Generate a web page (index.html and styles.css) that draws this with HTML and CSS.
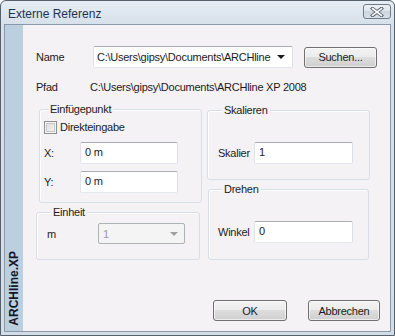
FILE: index.html
```html
<!DOCTYPE html>
<html lang="de">
<head>
    <meta charset="UTF-8">
    <title>Externe Referenz</title>
    <link rel="stylesheet" href="styles.css">
</head>
<body>
    <div class="window">
        <div class="titlebar">
            <span class="title">Externe Referenz</span>
            <span class="close-btn">
                <svg width="14" height="10" viewBox="0 0 14 10">
                    <path d="M2.5 1.5 L11.5 8.5 M11.5 1.5 L2.5 8.5" stroke="#4e5a66" stroke-width="3.4" stroke-linecap="square"/>
                    <path d="M2.5 1.5 L11.5 8.5 M11.5 1.5 L2.5 8.5" stroke="#ffffff" stroke-width="1.6" stroke-linecap="square"/>
                </svg>
            </span>
        </div>

        <div class="client">
            <div class="sidebar"><span class="brand">ARCHline.XP</span></div>

            <div class="main">
                <div class="name-row">
                    <span class="lbl-name">Name</span>
                    <div class="combo combo-name">
                        <span class="combo-text">C:\Users\gipsy\Documents\ARCHline</span>
                        <span class="arrow"></span>
                    </div>
                    <button class="btn btn-search">Suchen...</button>
                </div>

                <div class="path-row">
                    <span class="lbl-path">Pfad</span>
                    <span>C:\Users\gipsy\Documents\ARCHline XP 2008</span>
                </div>

                <div class="groups">
                    <div class="col-left">
                        <div class="group group-insert">
                            <span class="group-title">Einfügepunkt</span>
                            <div class="check-row">
                                <span class="checkbox"></span>
                                <span>Direkteingabe</span>
                            </div>
                            <div class="field-row">
                                <span class="lbl-xy">X:</span>
                                <div class="input input-xy">0 m</div>
                            </div>
                            <div class="field-row row-y">
                                <span class="lbl-xy">Y:</span>
                                <div class="input input-xy">0 m</div>
                            </div>
                        </div>

                        <div class="group group-unit">
                            <span class="group-title">Einheit</span>
                            <div class="field-row row-unit">
                                <span class="lbl-unit">m</span>
                                <div class="combo combo-disabled">
                                    <span class="combo-text">1</span>
                                    <span class="arrow"></span>
                                </div>
                            </div>
                        </div>
                    </div>

                    <div class="col-right">
                        <div class="group group-scale">
                            <span class="group-title">Skalieren</span>
                            <div class="field-row row-right">
                                <span class="lbl-right">Skalier</span>
                                <div class="input input-right">1</div>
                            </div>
                        </div>

                        <div class="group group-rotate">
                            <span class="group-title">Drehen</span>
                            <div class="field-row row-right">
                                <span class="lbl-right">Winkel</span>
                                <div class="input input-right">0</div>
                            </div>
                        </div>
                    </div>
                </div>

                <div class="actions">
                    <button class="btn btn-ok">OK</button>
                    <button class="btn btn-cancel">Abbrechen</button>
                </div>
            </div>
        </div>
    </div>
</body>
</html>
```

FILE: styles.css
```css
* {
    box-sizing: border-box;
}

body {
    margin: 0;
    font-family: "Liberation Sans", Arial, sans-serif;
    font-size: 11px;
    letter-spacing: -0.25px;
    color: #1b1b1b;
    background: #ffffff;
}

.window {
    width: 395px;
    height: 336px;
    display: flex;
    flex-direction: column;
    padding: 0 3px 3px;
    border: 1px solid #55616d;
    border-radius: 6px 6px 0 0;
    background: linear-gradient(#e6edf4, #d6e0ea 24px, #d2dde8);
}

/* title bar */
.titlebar {
    height: 23px;
    display: flex;
    justify-content: space-between;
    align-items: flex-start;
}

.title {
    margin: 6px 0 0 4px;
    font-size: 12px;
    line-height: 14px;
    letter-spacing: 0;
    color: #1e3350;
}

.close-btn {
    margin-top: 3px;
    width: 28px;
    height: 15px;
    display: flex;
    align-items: center;
    justify-content: center;
    border: 1px solid #6f7c8a;
    border-radius: 3px;
    background: linear-gradient(#eef2f6, #dde4eb 50%, #ccd5de 50%, #d8e0e8);
}

/* client area */
.client {
    flex: 1;
    display: flex;
    border: 1px solid #8b98a5;
    background: #f5f2f5;
}

.sidebar {
    width: 18px;
    display: flex;
    flex-direction: column;
    justify-content: flex-end;
    align-items: center;
    padding-bottom: 5px;
    background: #bccfdf;
}

.brand {
    writing-mode: vertical-rl;
    transform: rotate(180deg);
    font-size: 12px;
    font-weight: bold;
    line-height: 18px;
    letter-spacing: 0;
    color: #101828;
}

.main {
    flex: 1;
    padding: 21px 0 0 13px;
}

/* name / path */
.name-row {
    display: flex;
    align-items: center;
    height: 22px;
}

.lbl-name {
    width: 57px;
}

.combo {
    display: flex;
    align-items: center;
    justify-content: space-between;
    background: #ffffff;
    border: 1px solid;
    border-color: #abadb3 #dbdfe6 #e3e9ef #e2e3ea;
    border-radius: 2px;
    overflow: hidden;
}

.combo-name {
    width: 200px;
    height: 22px;
    padding: 0 7px 0 3px;
}

.combo-text {
    white-space: nowrap;
}

.arrow {
    flex: none;
    width: 0;
    height: 0;
    border-left: 4px solid transparent;
    border-right: 4px solid transparent;
    border-top: 4px solid #1b1b1b;
}

.btn {
    height: 21px;
    padding: 0;
    font-family: inherit;
    font-size: 11px;
    letter-spacing: -0.25px;
    color: #1b1b1b;
    border: 1px solid #707070;
    border-radius: 3px;
    background: linear-gradient(#f3f3f3, #ebebeb 50%, #dddddd 50%, #cfcfcf);
    box-shadow: inset 0 0 0 1px rgba(255, 255, 255, 0.6);
}

.btn-search {
    width: 73px;
    margin-left: 11px;
}

.path-row {
    display: flex;
    margin-top: 12px;
    line-height: 14px;
}

.lbl-path {
    width: 54px;
}

/* group boxes */
.groups {
    display: flex;
    margin-top: 8px;
}

.col-left {
    width: 166px;
}

.col-right {
    margin-left: 5px;
}

.group {
    border: 1px solid #d5dfe5;
    border-radius: 3px;
    box-shadow: inset 1px 1px 0 #ffffff;
}

.group-title {
    display: table;
    margin: -8px 0 0 4px;
    padding: 0 2px;
    line-height: 14px;
    background: #f5f2f5;
}

.group-insert {
    width: 163px;
    margin: 7px 0 0 3px;
    padding: 0 0 9px 4px;
}

.check-row {
    display: flex;
    align-items: center;
    gap: 3px;
    height: 14px;
    margin-top: 4px;
}

.checkbox {
    width: 13px;
    height: 13px;
    border: 1px solid #8e8f8f;
    background: linear-gradient(135deg, #dcdcdc, #f4f4f4);
    box-shadow: inset 0 0 0 1px #f4f4f4, inset 0 0 0 2px #c8c8c8;
}

.field-row {
    display: flex;
    align-items: center;
    margin-top: 8px;
}

.row-y {
    margin-top: 7px;
}

.lbl-xy {
    width: 36px;
}

.input {
    height: 22px;
    padding: 0 4px;
    line-height: 18px;
    background: #ffffff;
    border: 1px solid;
    border-color: #abadb3 #dbdfe6 #e3e9ef #e2e3ea;
    border-radius: 2px;
}

.input-xy {
    width: 98px;
}

.group-unit {
    width: 164px;
    margin-top: 9px;
    padding: 0 0 15px 10px;
}

.row-unit {
    margin-top: 4px;
}

.lbl-unit {
    width: 51px;
}

.combo-disabled {
    width: 87px;
    height: 21px;
    padding: 0 6px 0 4px;
    color: #9b9b9b;
    background: #f4f4f4;
    border-color: #adb2b5;
}

.combo-disabled .arrow {
    border-top-color: #a0a0a0;
}

.group-scale {
    width: 163px;
    margin-top: 8px;
    padding: 0 0 15px 10px;
}

.row-right {
    margin-top: 25px;
}

.lbl-right {
    width: 36px;
}

.input-right {
    width: 99px;
}

.group-rotate {
    width: 161px;
    margin: 9px 0 0 1px;
    padding: 0 0 16px 9px;
}

/* buttons */
.actions {
    display: flex;
    justify-content: flex-end;
    gap: 21px;
    margin: 40px 10px 0 0;
}

.btn-ok {
    width: 74px;
}

.btn-cancel {
    width: 72px;
}
```
